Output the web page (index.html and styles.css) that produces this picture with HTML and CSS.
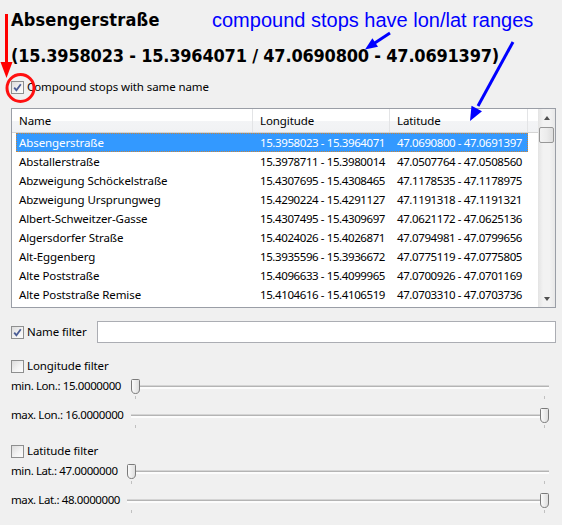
FILE: index.html
```html
<!DOCTYPE html>
<html>
<head>
<meta charset="utf-8">
<link rel="stylesheet" href="styles.css">
</head>
<body>
<div class="app">
  <h1 class="title">Absengerstraße</h1>
  <div class="coords">(15.3958023 - 15.3964071 / 47.0690800 - 47.0691397)</div>

  <label class="check-row compound">
    <span class="cb"><svg viewBox="0 0 9 9" class="tick"><path d="M1.2 4.6 L3.4 7.2 L7.8 1.2" /></svg></span>
    <span>Compound stops with same name</span>
  </label>

  <div class="list">
    <div class="view">
      <div class="head">
        <div class="hc h1">Name</div>
        <div class="hc h2">Longitude</div>
        <div class="hc h3">Latitude</div>
        <div class="hc hf"></div>
      </div>
      <div class="rows">
        <div class="row sel"><span>Absengerstraße</span><span>15.3958023 - 15.3964071</span><span>47.0690800 - 47.0691397</span></div>
        <div class="row"><span>Abstallerstraße</span><span>15.3978711 - 15.3980014</span><span>47.0507764 - 47.0508560</span></div>
        <div class="row"><span>Abzweigung Schöckelstraße</span><span>15.4307695 - 15.4308465</span><span>47.1178535 - 47.1178975</span></div>
        <div class="row"><span>Abzweigung Ursprungweg</span><span>15.4290224 - 15.4291127</span><span>47.1191318 - 47.1191321</span></div>
        <div class="row"><span>Albert-Schweitzer-Gasse</span><span>15.4307495 - 15.4309697</span><span>47.0621172 - 47.0625136</span></div>
        <div class="row"><span>Algersdorfer Straße</span><span>15.4024026 - 15.4026871</span><span>47.0794981 - 47.0799656</span></div>
        <div class="row"><span>Alt-Eggenberg</span><span>15.3935596 - 15.3936672</span><span>47.0775119 - 47.0775805</span></div>
        <div class="row"><span>Alte Poststraße</span><span>15.4096633 - 15.4099965</span><span>47.0700926 - 47.0701169</span></div>
        <div class="row"><span>Alte Poststraße Remise</span><span>15.4104616 - 15.4106519</span><span>47.0703310 - 47.0703736</span></div>
      </div>
    </div>
    <div class="vscroll">
      <div class="sbtn"><span class="arrow up"></span></div>
      <div class="strack"><div class="sthumb"></div></div>
      <div class="sbtn"><span class="arrow down"></span></div>
    </div>
  </div>

  <div class="namefilter">
    <label class="check-row">
      <span class="cb"><svg viewBox="0 0 9 9" class="tick"><path d="M1.2 4.6 L3.4 7.2 L7.8 1.2" /></svg></span>
      <span>Name filter</span>
    </label>
    <div class="textbox"></div>
  </div>

  <label class="check-row group-head lon-head">
    <span class="cb"></span>
    <span>Longitude filter</span>
  </label>
  <div class="sliders lon">
    <div class="slabel">min. Lon.: 15.0000000</div>
    <div class="slider"><div class="track"></div><span class="tk l"></span><span class="tk r"></span><span class="thumb at-min"><svg viewBox="0 0 9 15"><defs><linearGradient id="g1" x1="0" x2="1"><stop offset="0" stop-color="#fdfdfd"/><stop offset="1" stop-color="#dcdcdc"/></linearGradient></defs><path d="M1.5 .5 H7.5 Q8.5 .5 8.5 1.5 V10 Q8.5 14.5 4.5 14.5 Q.5 14.5 .5 10 V1.5 Q.5 .5 1.5 .5 Z" fill="url(#g1)" stroke="#7a7a7a"/></svg></span></div>
    <div class="slabel">max. Lon.: 16.0000000</div>
    <div class="slider"><div class="track"></div><span class="tk l"></span><span class="tk r"></span><span class="thumb at-max"><svg viewBox="0 0 9 15"><path d="M1.5 .5 H7.5 Q8.5 .5 8.5 1.5 V10 Q8.5 14.5 4.5 14.5 Q.5 14.5 .5 10 V1.5 Q.5 .5 1.5 .5 Z" fill="url(#g1)" stroke="#7a7a7a"/></svg></span></div>
  </div>

  <label class="check-row group-head lat-head">
    <span class="cb"></span>
    <span>Latitude filter</span>
  </label>
  <div class="sliders lat">
    <div class="slabel">min. Lat.: 47.0000000</div>
    <div class="slider"><div class="track"></div><span class="tk l"></span><span class="tk r"></span><span class="thumb at-min"><svg viewBox="0 0 9 15"><path d="M1.5 .5 H7.5 Q8.5 .5 8.5 1.5 V10 Q8.5 14.5 4.5 14.5 Q.5 14.5 .5 10 V1.5 Q.5 .5 1.5 .5 Z" fill="url(#g1)" stroke="#7a7a7a"/></svg></span></div>
    <div class="slabel">max. Lat.: 48.0000000</div>
    <div class="slider"><div class="track"></div><span class="tk l"></span><span class="tk r"></span><span class="thumb at-max"><svg viewBox="0 0 9 15"><path d="M1.5 .5 H7.5 Q8.5 .5 8.5 1.5 V10 Q8.5 14.5 4.5 14.5 Q.5 14.5 .5 10 V1.5 Q.5 .5 1.5 .5 Z" fill="url(#g1)" stroke="#7a7a7a"/></svg></span></div>
  </div>
</div>

<div class="note">compound stops have lon/lat ranges</div>
<svg class="annot" width="562" height="525" viewBox="0 0 562 525">
  <line x1="6.5" y1="14" x2="6.5" y2="66" stroke="#ff0000" stroke-width="3"/>
  <polygon points="0.5,62 12.5,62 6.5,78" fill="#ff0000"/>
  <circle cx="20.5" cy="88" r="13.5" fill="none" stroke="#ff1010" stroke-width="3"/>
  <line x1="390" y1="33" x2="374" y2="43.5" stroke="#0000ff" stroke-width="3"/>
  <polygon points="365,49.5 378,46.8 372.4,38.3" fill="#0000ff"/>
  <line x1="513" y1="42" x2="478" y2="106" stroke="#0000ff" stroke-width="3"/>
  <polygon points="470,121 482,111.3 471.5,105.8" fill="#0000ff"/>
</svg>
</body>
</html>
```

FILE: styles.css
```css
html, body {
  margin: 0;
  padding: 0;
}
body {
  background: #f0f0f0;
  font-family: "Noto Sans", "Open Sans", sans-serif;
  font-size: 11.5px;
  letter-spacing: -0.1px;
  color: #000;
  width: 562px;
  height: 525px;
  overflow: hidden;
  position: relative;
}
.app {
  display: flex;
  flex-direction: column;
  padding: 0 6px 0 11px;
}
.title {
  margin: 9px 0 0;
  font-family: "DejaVu Sans Condensed", "DejaVu Sans", sans-serif;
  font-stretch: condensed;
  font-weight: bold;
  font-size: 18px;
  line-height: 21px;
  letter-spacing: 0.2px;
}
.coords {
  margin-top: 15px;
  font-family: "DejaVu Sans Condensed", "DejaVu Sans", sans-serif;
  font-stretch: condensed;
  font-weight: bold;
  font-size: 18px;
  line-height: 21px;
  letter-spacing: -0.2px;
}
.check-row {
  display: flex;
  align-items: center;
  gap: 3px;
  height: 16px;
  line-height: 16px;
}
.compound {
  margin-top: 13px;
}
.cb {
  width: 13px;
  height: 13px;
  box-sizing: border-box;
  border: 1px solid #8e8f8f;
  background: linear-gradient(135deg, #dcdcdc 0%, #f4f4f4 60%, #fcfcfc 100%);
  display: flex;
  align-items: center;
  justify-content: center;
  flex: none;
}
.tick {
  width: 9px;
  height: 9px;
}
.tick path {
  fill: none;
  stroke: #4b5d95;
  stroke-width: 1.8;
}

/* list */
.list {
  margin-top: 13px;
  height: 200px;
  box-sizing: border-box;
  border: 1px solid #9a9ea6;
  background: #fff;
  display: flex;
}
.view {
  flex: 1;
  display: flex;
  flex-direction: column;
  overflow: hidden;
}
.head {
  display: flex;
  height: 24px;
  flex: none;
  box-sizing: border-box;
  border-bottom: 1px solid #d5d5d5;
  background: linear-gradient(#ffffff 0%, #ffffff 50%, #f3f4f6 51%, #f1f2f4 100%);
}
.hc {
  box-sizing: border-box;
  border-right: 1px solid #e3e4e6;
  padding-left: 7px;
  line-height: 23px;
  color: #000;
}
.h1 { width: 241px; }
.h2 { width: 137px; }
.h3 { width: 138px; }
.hf { flex: 1; border-right: 0; }
.rows {
  padding-left: 4px;
}
.row {
  display: flex;
  height: 19px;
  line-height: 19px;
  width: 512px;
  white-space: nowrap;
}
.row span {
  box-sizing: border-box;
  padding-left: 3px;
  overflow: hidden;
}
.row span:nth-child(1) { width: 237px; }
.row span:nth-child(2) { width: 137px; padding-left: 7px; letter-spacing: -0.4px; }
.row span:nth-child(3) { width: 138px; padding-left: 7px; letter-spacing: -0.4px; }
.row.sel {
  background: #3399ff;
  color: #fff;
  outline: 1px dotted #c9853a;
  outline-offset: -1px;
}
.vscroll {
  width: 17px;
  display: flex;
  flex-direction: column;
  background: linear-gradient(90deg, #e3e3e3, #f2f2f2 30%, #f2f2f2 70%, #e8e8e8);
}
.sbtn {
  height: 17px;
  display: flex;
  align-items: center;
  justify-content: center;
}
.arrow {
  width: 0;
  height: 0;
  border-left: 3.5px solid transparent;
  border-right: 3.5px solid transparent;
}
.arrow.up { border-bottom: 4px solid #505050; }
.arrow.down { border-top: 4px solid #505050; }
.strack {
  flex: 1;
  padding: 1px 1px;
}
.sthumb {
  height: 16px;
  box-sizing: border-box;
  border: 1px solid #979797;
  border-radius: 2px;
  background: linear-gradient(90deg, #f3f3f3, #ececec 50%, #dedede);
}

/* name filter */
.namefilter {
  margin-top: 13px;
  display: flex;
  align-items: center;
  gap: 10px;
}
.textbox {
  flex: 1;
  height: 22px;
  box-sizing: border-box;
  border: 1px solid #abadb3;
  background: #fff;
}
.lon-head {
  margin-top: 15px;
}
.lat-head {
  margin-top: 11px;
}
.sliders {
  display: grid;
  grid-template-columns: auto 1fr;
  grid-auto-rows: 29px;
  column-gap: 7px;
  margin-right: 7px;
}
.slabel {
  padding-top: 4px;
  line-height: 16px;
  white-space: nowrap;
  letter-spacing: -0.4px;
}
.slider {
  position: relative;
}
.track {
  position: absolute;
  left: 0;
  right: 0;
  top: 11px;
  height: 1px;
  background: #b4b4b4;
  border-bottom: 2px solid #fcfcfc;
  border-top: 1px solid #d4d4d4;
}
.thumb {
  position: absolute;
  top: 5px;
  width: 9px;
  height: 15px;
}
.thumb svg {
  display: block;
  width: 9px;
  height: 15px;
}
.thumb.at-min { left: 0; }
.thumb.at-max { right: 0; }
.tk {
  position: absolute;
  top: 22px;
  width: 1px;
  height: 3px;
  background: #c0c0c0;
}
.tk.l { left: 4px; }
.tk.r { right: 4px; }

/* annotations */
.note {
  position: absolute;
  left: 212px;
  top: 8px;
  font-family: "Liberation Sans", Arial, sans-serif;
  font-size: 20px;
  line-height: 24px;
  letter-spacing: 0;
  color: #0000ff;
  white-space: nowrap;
}
.annot {
  position: absolute;
  left: 0;
  top: 0;
  pointer-events: none;
}
```
